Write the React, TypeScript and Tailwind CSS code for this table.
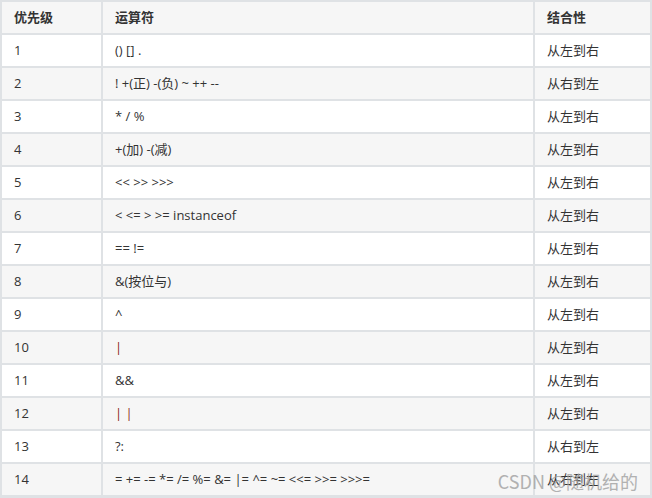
const rows: [string, string, string][] = [
  ['1', '() [] .', '从左到右'],
  ['2', '! +(正) -(负) ~ ++ --', '从右到左'],
  ['3', '* / %', '从左到右'],
  ['4', '+(加) -(减)', '从左到右'],
  ['5', '<< >> >>>', '从左到右'],
  ['6', '< <= > >= instanceof', '从左到右'],
  ['7', '== !=', '从左到右'],
  ['8', '&(按位与)', '从左到右'],
  ['9', '^', '从左到右'],
  ['10', '|', '从左到右'],
  ['11', '&&', '从左到右'],
  ['12', '||', '从左到右'],
  ['13', '?:', '从右到左'],
  ['14', '= += -= *= /= %= &= |= ^= ~= <<= >>= >>>=', '从右到左'],
];

const renderOp = (op: string) => {
  // the lone pipes are shown in a dark red in the source
  if (op === '|') return <span className="text-[#8b1c1c]">|</span>;
  if (op === '||') return <span className="text-[#8b1c1c]">| |</span>;
  return op;
};

const Cell = ({ children, bg, bold }: { children: React.ReactNode; bg: string; bold?: boolean }) => (
  <div className={`${bg} ${bold ? 'font-bold' : ''} flex items-center pl-[12px] h-[31px] whitespace-pre overflow-hidden`}>
    {children}
  </div>
);

export default function App() {
  return (
    <div
      className="relative w-[652px] h-[498px] bg-white text-[13px] text-[#333333]"
      style={{ fontFamily: '"Open Sans", "Noto Sans CJK SC", sans-serif' }}
    >
      <div className="grid grid-cols-[99px_430px_115px] gap-[2px] bg-[#dfe2e5] p-[2px] pb-[3px]">
        <Cell bg="bg-[#f6f6f6]" bold>优先级</Cell>
        <Cell bg="bg-[#f6f6f6]" bold>运算符</Cell>
        <Cell bg="bg-[#f6f6f6]" bold>结合性</Cell>
        {rows.map(([p, op, dir], i) => {
          const bg = i % 2 === 0 ? 'bg-white' : 'bg-[#f6f6f6]';
          return [
            <Cell key={`${p}a`} bg={bg}>{p}</Cell>,
            <Cell key={`${p}b`} bg={bg}>{renderOp(op)}</Cell>,
            <Cell key={`${p}c`} bg={bg}>{dir}</Cell>,
          ];
        })}
      </div>
      <div
        className="absolute right-[14px] bottom-[5px] text-[18px] leading-[24px] text-[#a0a0a0] opacity-80 pointer-events-none"
        style={{ fontFamily: '"Noto Sans CJK SC", sans-serif' }}
      >
        CSDN @随机给的
      </div>
    </div>
  );
}
